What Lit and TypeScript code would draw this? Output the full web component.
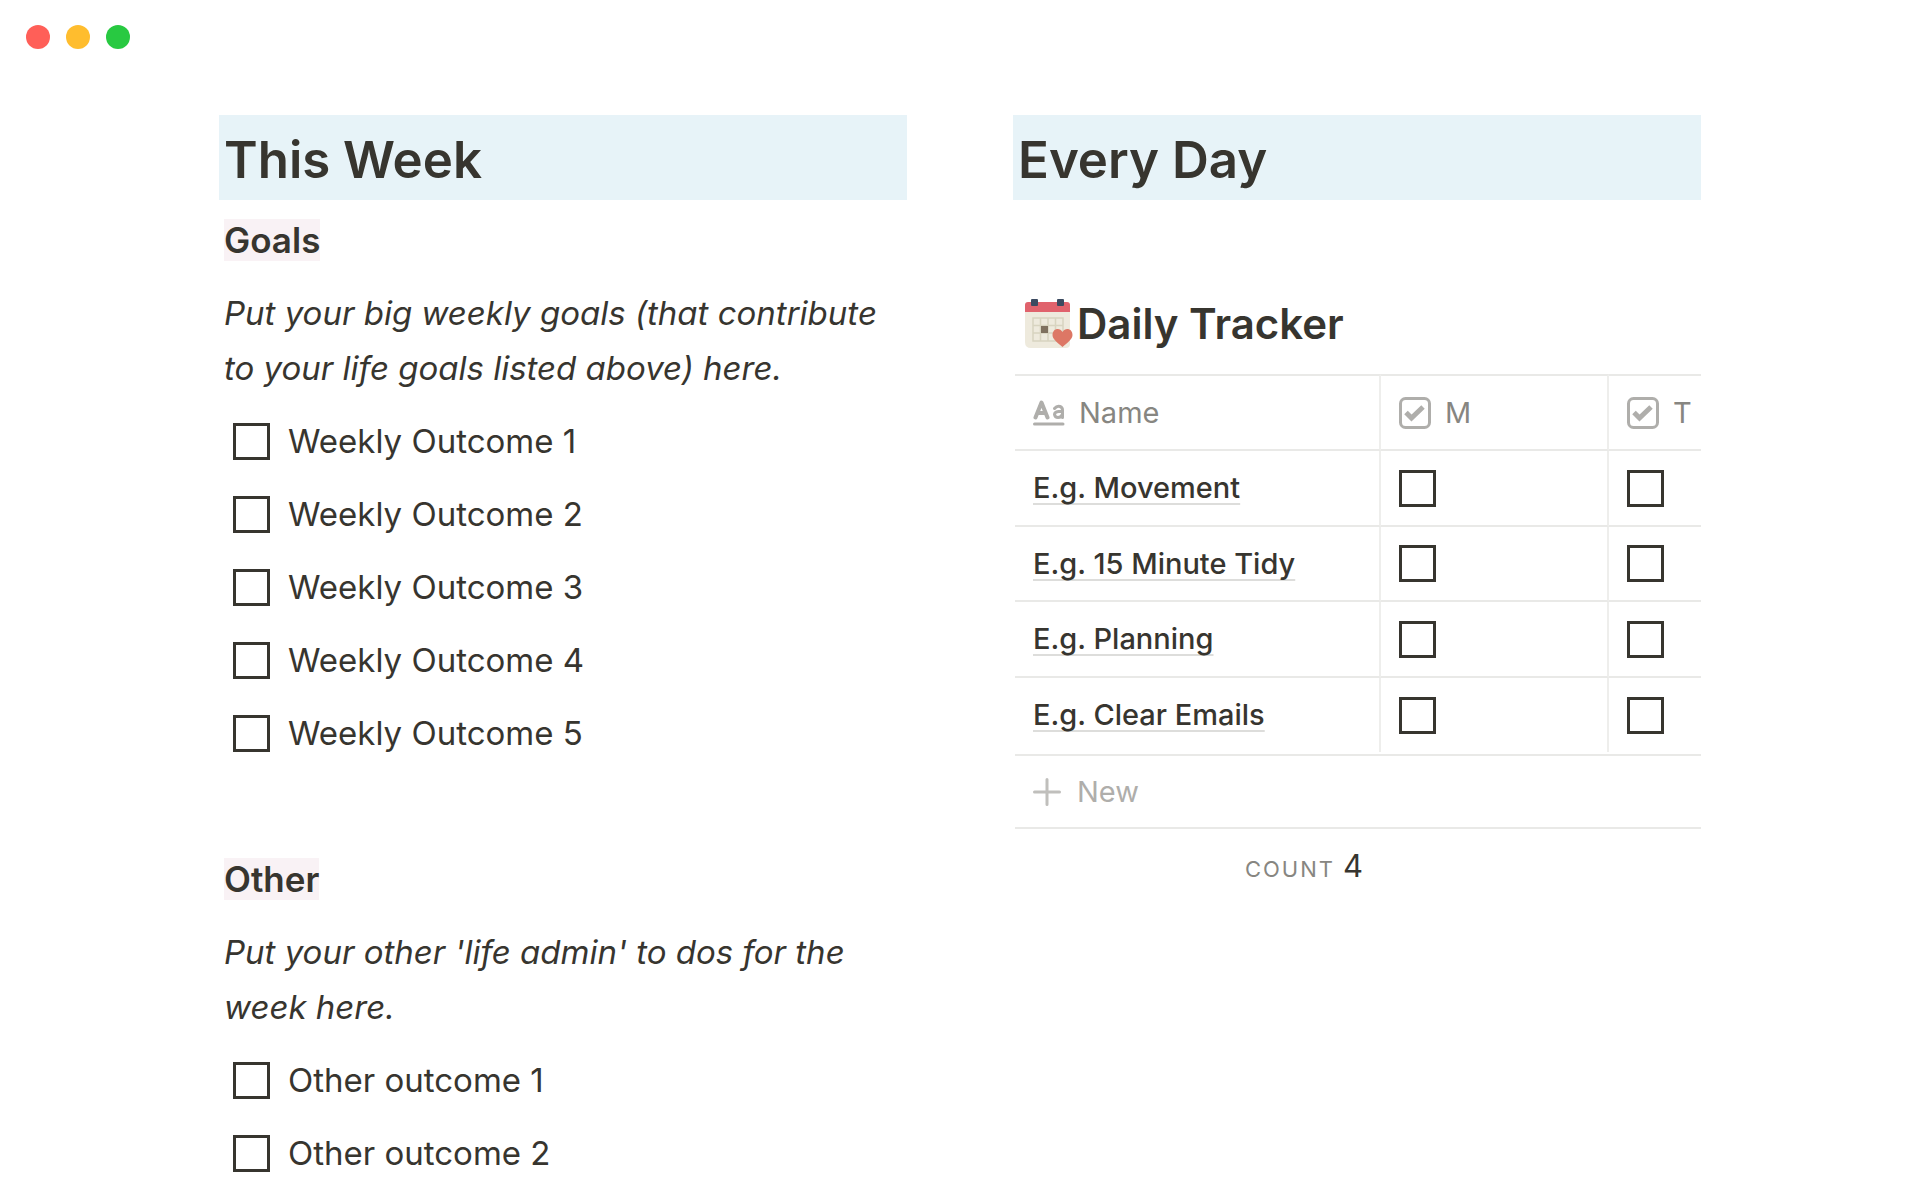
import { LitElement, html, css } from "lit";
import { customElement, property } from "lit/decorators.js";

const shared = css`
  * { box-sizing: border-box; }
  .box {
    appearance: none;
    flex: none;
    width: 37px;
    height: 37px;
    margin: 0;
    border: 3px solid #37352f;
    border-radius: 0;
    background: #fff;
  }
  .box:checked { background: #2eaadc; border-color: #2eaadc; }
`;

@customElement("todo-section")
export class TodoSection extends LitElement {
  @property() heading = "";
  @property() note = "";
  @property({ attribute: false }) items: string[] = [];

  static styles = [shared, css`
    :host { display: block; padding-left: 5px; }
    .heading, .note, .item { padding: 9px 0; font-size: 33px; line-height: 55px; }
    .heading { margin: 0; font-size: 35px; font-weight: 600; }
    .mark { background: #f9f2f5; }
    .note { margin: 0; font-style: italic; }
    .list { margin: 0; padding: 0; list-style: none; }
    .item { display: flex; align-items: center; gap: 18px; padding-left: 9px; }
  `];

  render() {
    return html`
      <h2 class="heading"><span class="mark">${this.heading}</span></h2>
      <p class="note">${this.note}</p>
      <ul class="list">
        ${this.items.map((item) => html`<li><label class="item"><input class="box" type="checkbox" />${item}</label></li>`)}
      </ul>
    `;
  }
}

@customElement("daily-tracker")
export class DailyTracker extends LitElement {
  private habits = ["E.g. Movement", "E.g. 15 Minute Tidy", "E.g. Planning", "E.g. Clear Emails"];
  private days = ["M", "T"];

  static styles = [shared, css`
    :host { display: block; padding-left: 2px; }
    .title { display: flex; align-items: center; gap: 3px; margin: 0 0 0 9px; font-size: 42px; line-height: 60px; font-weight: 600; }
    .emoji { flex: none; width: 50px; height: 52px; }
    .grid { width: 100%; margin-top: 20px; border-spacing: 0; table-layout: fixed; font-size: 29px; line-height: 40px; }
    .grid th, .grid td { height: 76px; padding: 0 18px; text-align: left; vertical-align: middle; border-bottom: 2px solid #e9e9e7; }
    .grid th { border-top: 2px solid #e9e9e7; height: 77px; font-weight: 400; color: #878681; }
    .grid th:not(:last-child), .grid td:not(:last-child) { border-right: 2px solid #eeeeec; }
    .grid tbody tr:nth-child(even) td { height: 75px; }
    .grid tbody tr:last-child td { height: 74px; border-bottom: 0; }
    .grid .name-col { width: 366px; }
    .grid .day-col { width: 228px; }
    .head { display: flex; align-items: center; gap: 14px; }
    .icon { flex: none; width: 32px; height: 32px; }
    .link { color: #37352f; font-weight: 500; text-decoration: underline 2px #dddddb; text-underline-offset: 5px; text-decoration-skip-ink: none; }
    .box { display: block; }
    .new { display: flex; align-items: center; gap: 16px; width: 100%; height: 75px; margin-top: 2px; padding: 0 18px; border: solid #e9e9e7; border-width: 2px 0; background: none; color: #afaeab; font: inherit; font-size: 29px; text-align: left; }
    .plus { width: 28px; height: 28px; }
    .count { display: flex; align-items: baseline; justify-content: flex-end; gap: 8px; width: 364px; padding: 17px 16px 0 0; font-size: 31px; line-height: 40px; }
    .label { font-size: 22px; letter-spacing: 2px; color: #878681; }
  `];

  private checkIcon() {
    return html`<svg class="icon" viewBox="0 0 32 32" fill="none" aria-hidden="true">
      <rect x="1.500" y="1.500" width="29" height="29" rx="5" stroke="#afaeab" stroke-width="3" />
      <path d="M7 15.500L12.500 21L24 10" stroke="#afaeab" stroke-width="5" />
    </svg>`;
  }

  render() {
    return html`
      <h2 class="title">
        <svg class="emoji" viewBox="0 0 50 52" aria-hidden="true">
          <path d="M1 13H46V46Q46 50 42 50H7Q1 50 1 44Z" fill="#eeeadd" />
          <path d="M1 7Q1 4 4 4H43Q46 4 46 7V14H1Z" fill="#e0626c" />
          <rect x="7" y="1" width="7" height="7" rx="1" fill="#3b4a60" />
          <rect x="33" y="1" width="7" height="7" rx="1" fill="#3b4a60" />
          <path d="M9 20H39V43H9ZM9 27.500H39M9 35H39M16.500 20V43M24 20V43M31.500 20V43" fill="none" stroke="#d8d4c0" stroke-width="1.500" />
          <rect x="17" y="28" width="7" height="7" fill="#7f715f" />
          <path d="M38.500 49C33 44.500 28.500 41 28.500 37C28.500 30 36 29 38.500 34C41 29 48.500 30 48.500 37C48.500 41 44 44.500 38.500 49Z" fill="#dd7765" />
        </svg>
        Daily Tracker
      </h2>
      <table class="grid">
        <thead>
          <tr>
            <th class="name-col"><span class="head">
              <svg class="icon" viewBox="0 0 32 32" fill="none" stroke="#afaeab" stroke-width="4" stroke-linecap="round" stroke-linejoin="round" aria-hidden="true">
                <path d="M2.500 20.500L8.500 5.500L14.500 20.500M5 16H12" />
                <path d="M21.500 11.500Q24 8.500 27 9.500Q29.500 10.500 29.500 13V20.500M29.500 14.500H25.500Q21.500 15 21.500 17.500Q22 20.500 25 20.500Q28.500 20.500 29.500 17" stroke-width="3" />
                <path d="M1.500 27H30" stroke-width="3" />
              </svg>Name</span></th>
            ${this.days.map((day, i) => html`<th class=${i === 0 ? "day-col" : ""}><span class="head">${this.checkIcon()}${day}</span></th>`)}
          </tr>
        </thead>
        <tbody>
          ${this.habits.map((habit) => html`<tr>
            <td><a class="link" href="#">${habit}</a></td>
            ${this.days.map((day) => html`<td><input class="box" type="checkbox" aria-label="${habit} ${day}" /></td>`)}
          </tr>`)}
        </tbody>
      </table>
      <button class="new" type="button">
        <svg class="plus" viewBox="0 0 28 28" fill="none" stroke="#c0bfbc" stroke-width="3" stroke-linecap="round" aria-hidden="true"><path d="M1.500 14H26.500M14 1.500V26.500" /></svg>
        New
      </button>
      <div class="count"><span class="label">COUNT</span>${this.habits.length}</div>
    `;
  }
}

@customElement("app-root")
export class AppRoot extends LitElement {
  static styles = css`
    * { box-sizing: border-box; }
    :host { display: block; background: #fff; color: #37352f; font-family: Inter, "Liberation Sans", sans-serif; }
    .titlebar { display: flex; gap: 16px; padding: 25px 26px; }
    .light { width: 24px; height: 24px; border-radius: 50%; }
    .red { background: #ff5f58; }
    .amber { background: #ffbd2e; }
    .green { background: #28c941; }
    .columns { display: grid; grid-template-columns: 1fr 1fr; gap: 106px; padding: 41px 219px 0; }
    .banner { margin: 0 0 4px; padding: 4px 5px 0; background: #e7f3f8; font-size: 51px; line-height: 81px; font-weight: 600; }
    .section + .section { margin-top: 73px; }
    .tracker { margin-top: 94px; }
  `;

  render() {
    return html`
      <header class="titlebar">
        <span class="light red"></span><span class="light amber"></span><span class="light green"></span>
      </header>
      <main class="columns">
        <section>
          <h1 class="banner">This Week</h1>
          <todo-section class="section" heading="Goals"
            note="Put your big weekly goals (that contribute to your life goals listed above) here."
            .items=${[1, 2, 3, 4, 5].map((n) => `Weekly Outcome ${n}`)}></todo-section>
          <todo-section class="section" heading="Other"
            note="Put your other 'life admin' to dos for the week here."
            .items=${[1, 2].map((n) => `Other outcome ${n}`)}></todo-section>
        </section>
        <section>
          <h1 class="banner">Every Day</h1>
          <daily-tracker class="tracker"></daily-tracker>
        </section>
      </main>
    `;
  }
}
